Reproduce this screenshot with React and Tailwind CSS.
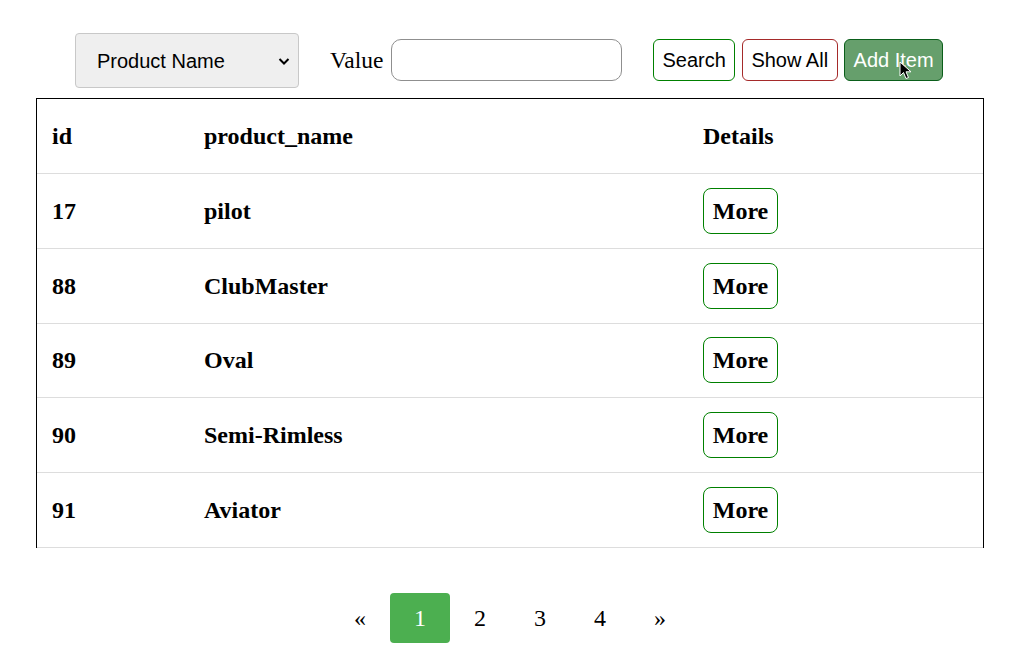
import React from "react";

const rows = [
  { id: 17, name: "pilot" },
  { id: 88, name: "ClubMaster" },
  { id: 89, name: "Oval" },
  { id: 90, name: "Semi-Rimless" },
  { id: 91, name: "Aviator" },
];

function Cursor() {
  return (
    <svg className="absolute left-[54px] top-[21px]" width="14" height="20" viewBox="0 0 14 20">
      <path d="M1 1 L1 15 L4.5 11.5 L7 17.5 L9.5 16.5 L7 10.8 L12 10.8 Z" fill="#000" stroke="#fff" strokeWidth="1" strokeLinejoin="round" />
    </svg>
  );
}

export default function App() {
  const serif = { fontFamily: '"Liberation Serif", "Times New Roman", serif' };
  const sans = { fontFamily: '"Liberation Sans", Arial, sans-serif' };

  return (
    <div className="min-h-screen bg-white text-black" style={serif}>
      {/* search bar */}
      <div className="flex items-center pt-[33px] pl-[75px] h-[88px]">
        <div
          className="flex items-center justify-between w-[224px] h-[55px] bg-[#efefef] border border-[#c8c8c8] rounded-[4px] pl-[21px] pr-[6px] text-[20px]"
          style={sans}
        >
          <span>Product Name</span>
          <svg width="16" height="16" viewBox="0 0 16 16">
            <path d="M3.5 6 L8 10.5 L12.5 6" fill="none" stroke="#000" strokeWidth="2" />
          </svg>
        </div>
        <label className="ml-[31px] w-[54px] text-[23.5px] mr-[7px] whitespace-nowrap">Value</label>
        <input className="w-[231px] h-[42px] border border-[#8f8f8f] rounded-[10px] outline-none -mt-[1px]" />
        <div className="flex items-center gap-[6.5px] ml-[31px] text-[20px] -mt-[1px]" style={sans}>
          <button className="h-[42px] px-[8.5px] border border-[#008000] rounded-[6px] bg-white">Search</button>
          <button className="h-[42px] px-[8.5px] border border-[#a52a2a] rounded-[6px] bg-white">Show All</button>
          <button className="relative h-[42px] px-[8.5px] border border-[#0a5e1a] rounded-[6px] bg-[#669f6c] text-white">
            Add Item
            <Cursor />
          </button>
        </div>
      </div>

      {/* table */}
      <div className="ml-[36px] mt-[10px] w-[948px] border-t border-l border-r border-black text-[24px] font-bold">
        <div className="grid grid-cols-[152px_499px_1fr] h-[75px] items-center border-b border-[#dddddd]">
          <div className="pl-[15px]">id</div>
          <div className="pl-[15px]">product_name</div>
          <div className="pl-[15px]">Details</div>
        </div>
        {rows.map((r) => (
          <div key={r.id} className="grid grid-cols-[152px_499px_1fr] h-[74.8px] items-center border-b border-[#dddddd]">
            <div className="pl-[15px]">{r.id}</div>
            <div className="pl-[15px]">{r.name}</div>
            <div className="pl-[15px]">
              <button className="h-[46px] w-[75px] border border-[#008000] rounded-[8px] bg-white font-bold">More</button>
            </div>
          </div>
        ))}
      </div>

      {/* pagination */}
      <div className="flex justify-center mt-[45px] text-[24px]">
        <div className="flex -ml-[2px]">
          <a className="w-[60px] h-[50px] flex items-center justify-center">«</a>
          <a className="w-[60px] h-[50px] flex items-center justify-center bg-[#4caf50] text-white rounded-[4px]">1</a>
          <a className="w-[60px] h-[50px] flex items-center justify-center">2</a>
          <a className="w-[60px] h-[50px] flex items-center justify-center">3</a>
          <a className="w-[60px] h-[50px] flex items-center justify-center">4</a>
          <a className="w-[60px] h-[50px] flex items-center justify-center">»</a>
        </div>
      </div>
    </div>
  );
}
